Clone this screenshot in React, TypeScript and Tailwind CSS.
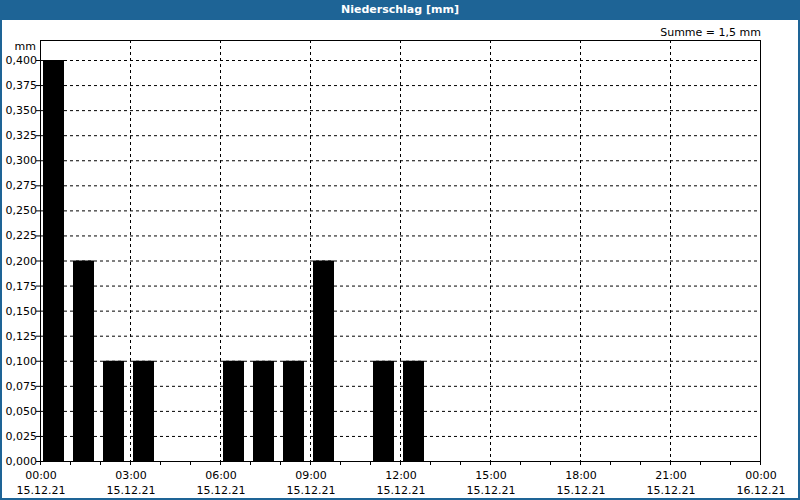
export default function App() {
  const L = 40, R = 760, T = 40, B = 461;
  const yv = (v: number) => B - (v / 0.4) * (B - 60);
  const ys = Array.from({ length: 17 }, (_, i) => i * 0.025);
  const bars: [number, number][] = [[0, 0.4], [1, 0.2], [2, 0.1], [3, 0.1], [6, 0.1], [7, 0.1], [8, 0.1], [9, 0.2], [11, 0.1], [12, 0.1]];
  const xl = ["00:00", "03:00", "06:00", "09:00", "12:00", "15:00", "18:00", "21:00", "00:00"];
  return (
    <div className="w-[800px] h-[500px] bg-[#1e6496] flex flex-col px-[2px] pb-[2px]" style={{ fontFamily: "Tahoma, 'DejaVu Sans', sans-serif" }}>
      <div className="h-[20px] flex items-center justify-center text-white text-[11px] font-bold">Niederschlag [mm]</div>
      <div className="flex-1 bg-white">
        <svg width="796" height="478" viewBox="2 20 796 478" fontSize="11" fontFamily="Tahoma, 'DejaVu Sans', sans-serif">
          {ys.slice(1).map((v) => (
            <line key={v} x1={L} x2={R} y1={yv(v) + 0.5} y2={yv(v) + 0.5} stroke="#000" strokeDasharray="3 3" />
          ))}
          {Array.from({ length: 7 }, (_, i) => L + 90 * (i + 1)).map((x) => (
            <line key={x} x1={x + 0.5} x2={x + 0.5} y1={T} y2={B} stroke="#000" strokeDasharray="3 3" />
          ))}
          {bars.map(([h, v]) => (
            <rect key={h} x={L + h * 30 + 3} y={yv(v)} width={21} height={B - yv(v)} fill="#000" />
          ))}
          <rect x={L + 0.5} y={T + 0.5} width={R - L} height={B - T} fill="none" stroke="#000" />
          {ys.map((v) => (
            <g key={v}>
              <line x1={L - 4} x2={L} y1={yv(v) + 0.5} y2={yv(v) + 0.5} stroke="#000" />
              <text x={L - 3} y={yv(v) + 4} textAnchor="end">{v.toFixed(3).replace(".", ",")}</text>
            </g>
          ))}
          {Array.from({ length: 25 }, (_, i) => L + 30 * i).map((x) => (
            <line key={x} x1={x + 0.5} x2={x + 0.5} y1={B} y2={B + 4} stroke="#000" />
          ))}
          {xl.map((t, i) => (
            <g key={i}>
              <text x={L + 90 * i + 1} y={479} textAnchor="middle">{t}</text>
              <text x={L + 90 * i + 1} y={494} textAnchor="middle">{i === 8 ? "16.12.21" : "15.12.21"}</text>
            </g>
          ))}
          <text x={36} y={50} textAnchor="end">mm</text>
          <text x={761} y={36} textAnchor="end">Summe = 1,5 mm</text>
        </svg>
      </div>
    </div>
  );
}
